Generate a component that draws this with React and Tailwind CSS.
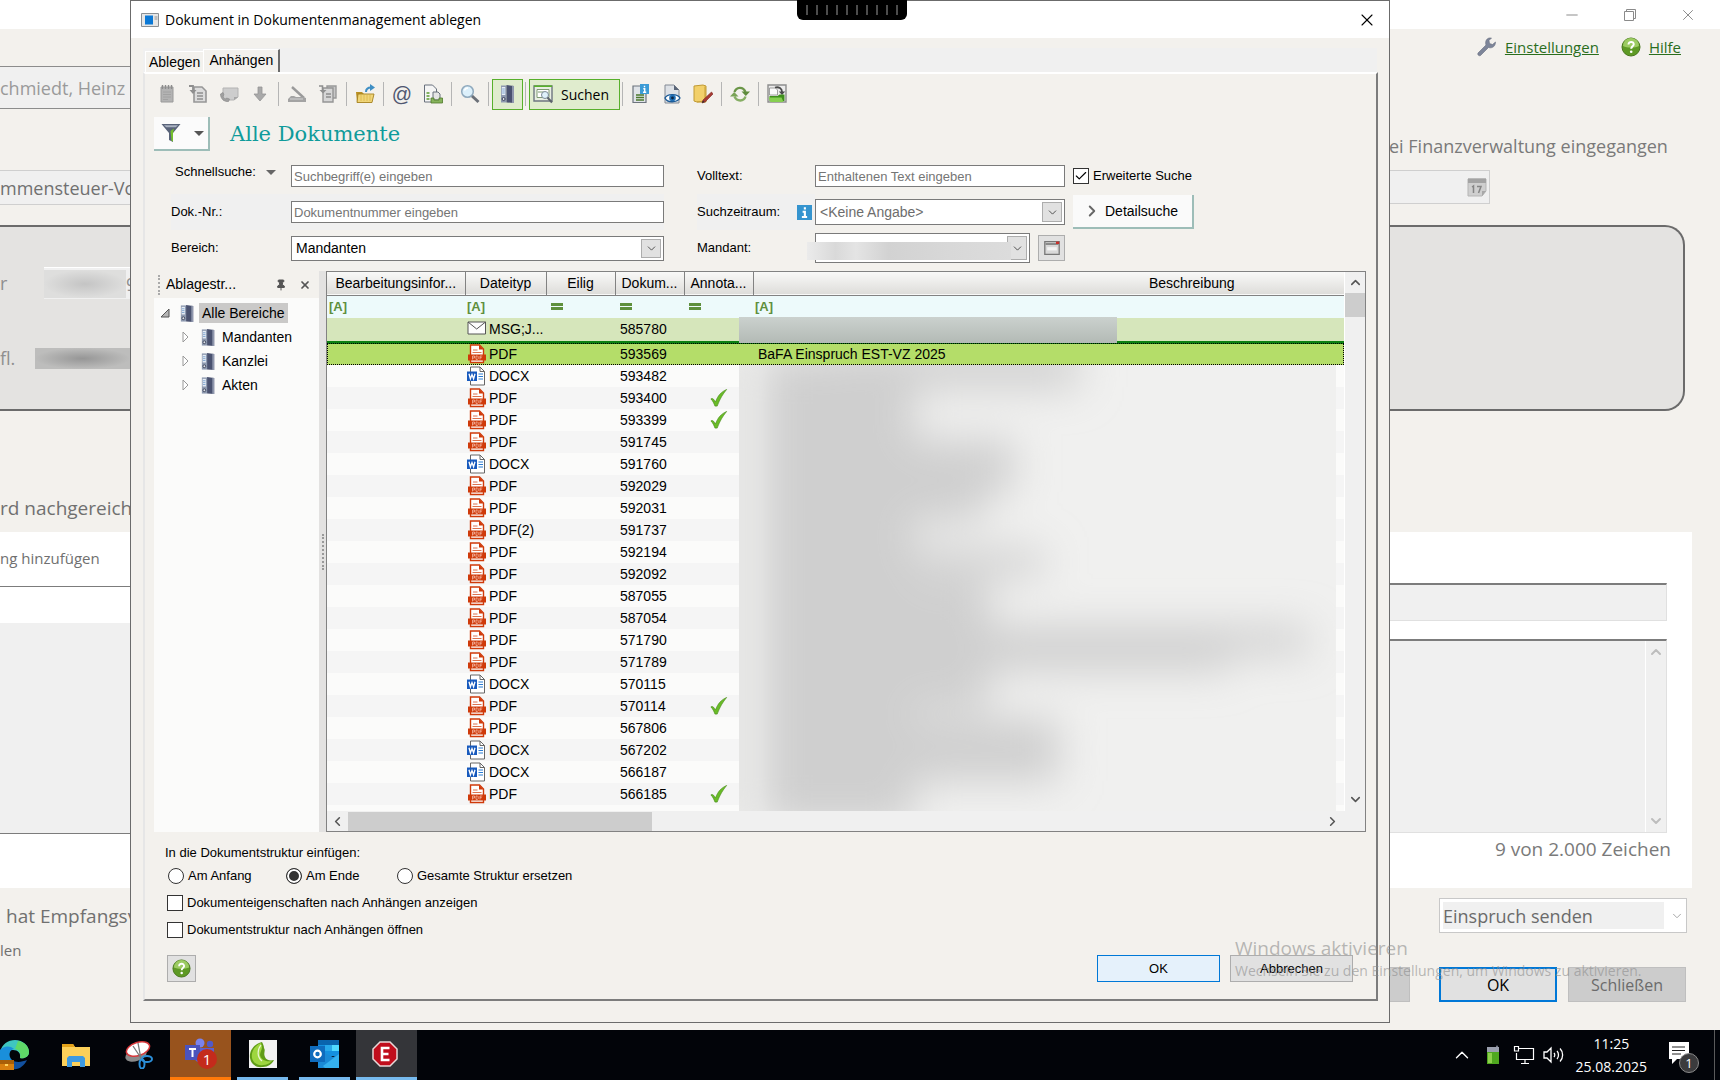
import React, { useState } from 'react';
import { Check, ChevronDown, ChevronLeft, ChevronRight, ChevronUp, Minus, Pin, X } from 'lucide-react';

const columns = [
  { label: 'Bearbeitungsinfor...', filter: 'text' },
  { label: 'Dateityp', filter: 'text' },
  { label: 'Eilig', filter: 'equal' },
  { label: 'Dokum...', filter: 'equal' },
  { label: 'Annota...', filter: 'equal' },
  { label: 'Beschreibung', filter: 'text' },
];

const documents = [
  { type: 'DOCX', no: '593482' },
  { type: 'PDF', no: '593400', checked: true },
  { type: 'PDF', no: '593399', checked: true },
  { type: 'PDF', no: '591745' },
  { type: 'DOCX', no: '591760' },
  { type: 'PDF', no: '592029' },
  { type: 'PDF', no: '592031' },
  { type: 'PDF(2)', no: '591737' },
  { type: 'PDF', no: '592194' },
  { type: 'PDF', no: '592092' },
  { type: 'PDF', no: '587055' },
  { type: 'PDF', no: '587054' },
  { type: 'PDF', no: '571790' },
  { type: 'PDF', no: '571789' },
  { type: 'DOCX', no: '570115' },
  { type: 'PDF', no: '570114', checked: true },
  { type: 'PDF', no: '567806' },
  { type: 'DOCX', no: '567202' },
  { type: 'DOCX', no: '566187' },
  { type: 'PDF', no: '566185', checked: true },
];

/* ---------- Icons ---------- */

const Svg = ({ size = 20, className = '', children }) => (
  <svg viewBox="0 0 20 20" width={size} height={size} fill="none" className={`shrink-0 ${className}`} aria-hidden="true">
    {children}
  </svg>
);

const BinderIcon = ({ size = 20 }) => (
  <Svg size={size}>
    <path d="M3 1.5h5.5v17H3z" fill="#8e9ab0" />
    <path d="M8.5 1 16 2v17l-7.5-.5z" fill="#4a5270" />
    <path d="M14 1.8 16 2v17l-2-.1z" fill="#8f97ad" />
    <path d="M3.8 3h3.5v8H3.8z" fill="#e8eef6" />
    <path d="M4.2 5h2.6M4.2 7h2.6M4.2 9h2.6" stroke="#7fa5cf" strokeWidth="1" />
    <circle cx="5.6" cy="15" r="1.5" fill="#dfe4ec" stroke="#3c4359" />
  </Svg>
);

const NotepadIcon = () => (
  <Svg>
    <path d="M4 3h12v15H4z" fill="#b3b3b3" stroke="#9a9a9a" />
    <path d="M5.5 1v4M8.5 1v4M11.5 1v4M14.5 1v4" stroke="#8d8d8d" strokeWidth="1.4" />
    <path d="M6 8h8M6 10.5h8M6 13h8M6 15.5h5" stroke="#a2a2a2" />
  </Svg>
);

const PageInIcon = () => (
  <Svg>
    <path d="M6 3h8l4 4v11H6z" fill="#dcdcdc" stroke="#979797" strokeWidth="1.6" />
    <path d="M9 9h6M9 12h6M9 15h6" stroke="#8f8f8f" strokeWidth="1.4" />
    <path d="M1 2h4v6" stroke="#8f8f8f" strokeWidth="1.8" />
    <path d="m1.5 6 3.5 4 3.5-4z" fill="#8f8f8f" />
  </Svg>
);

const PhoneNoteIcon = () => (
  <Svg>
    <path d="M4 4h15v9l-4 3H4z" fill="#cdcdcd" stroke="#b3b3b3" />
    <path d="M1.5 10c0 5 4 8 8 7.500l1-2.500-3-1-1 1c-1.500-.5-2.300-2-2.500-3l1-1-1-2.500z" fill="#a0a0a0" stroke="#8c8c8c" strokeWidth=".7" />
    <path d="m19 13-4 3v-3z" fill="#a6a6a6" />
  </Svg>
);

const ArrowDownIcon = () => (
  <Svg>
    <path d="M8 3h4v7h4l-6 7-6-7h4z" fill="#a9a9a9" stroke="#969696" strokeWidth=".8" />
  </Svg>
);

const ScannerIcon = () => (
  <Svg>
    <path d="m5 3 12 11" stroke="#9a9a9a" strokeWidth="2.4" />
    <path d="m4 12-3 3v3h18v-4l-3-1H9l-2-1z" fill="#a3a3a3" />
    <path d="M3 15h13" stroke="#d3d3d3" />
  </Svg>
);

const PagesInIcon = () => (
  <Svg>
    <path d="M9 2h9v12H9z" fill="#c7c7c7" stroke="#999" strokeWidth="1.4" />
    <path d="M5 4h10v14H5z" fill="#d6d6d6" stroke="#959595" strokeWidth="1.4" />
    <path d="M8 10h5M8 13h5" stroke="#8d8d8d" strokeWidth="1.3" />
    <path d="M1 2h3.500v4" stroke="#8f8f8f" strokeWidth="1.6" />
    <path d="m1.5 6 3.500 3.500L8.500 6z" fill="#8f8f8f" />
  </Svg>
);

const FolderOpenIcon = () => (
  <Svg>
    <path d="M1 8h6l2 2h8v8H2z" fill="#b98f22" />
    <path d="M3 10h16l-2 8.500H2z" fill="#f0d578" stroke="#a5811f" strokeWidth=".9" />
    <path d="M6 11v6M9 11v6M12 11v6M15 11v6" stroke="#dcb94e" strokeWidth=".9" />
    <path d="M11 8c0-3 2-4.500 5-4.500" stroke="#3f8fc4" strokeWidth="2" />
    <path d="m15 0 5 3.500-5 3.500z" fill="#3f8fc4" />
  </Svg>
);

const ReportIcon = () => (
  <Svg>
    <path d="M1.500 1h8l4 4v13h-12z" fill="#f5f5f5" stroke="#68707c" />
    <path d="M3.500 9h3M3.500 12h3M3.500 15h3" stroke="#5b9a2e" strokeWidth="1.4" />
    <path d="M10 8h5l2 2v6h-7z" fill="#e5e5e5" stroke="#68707c" />
    <path d="M8 14h3v2h5v-2h3.500v5H8z" fill="#86b35c" stroke="#4f7a2c" strokeWidth=".8" />
  </Svg>
);

const SearchIcon = () => (
  <Svg>
    <path d="m11.500 11.500 7 6.500" stroke="#6b7078" strokeWidth="3" />
    <circle cx="7.5" cy="7.5" r="5.8" fill="#dcf0fb" stroke="#8fa9bd" strokeWidth="1.5" />
    <path d="M4.500 6.500c.5-1.500 2-2.500 3.500-2.500" stroke="#fff" strokeWidth="1.4" />
  </Svg>
);

const SearchPanelIcon = () => (
  <Svg>
    <path d="M1 2h18v15H1z" fill="#e9efe3" stroke="#6d7680" strokeWidth="1.4" />
    <path d="M1 2.200h18" stroke="#59b22b" strokeWidth="1.6" />
    <path d="M4 5.500h12v8H4z" fill="#fff" stroke="#7f9a73" />
    <path d="M5 8h6" stroke="#7f9a73" />
    <circle cx="12" cy="11" r="3.5" fill="#dff1fa" stroke="#7c8a98" />
    <path d="m14.500 13.500 4.500 5" stroke="#5c636b" strokeWidth="2" />
  </Svg>
);

const PageInfoIcon = () => (
  <Svg>
    <path d="M2 2h13v16.500H2z" fill="#dfe3e8" stroke="#6d747e" strokeWidth="1.2" />
    <path d="M5 11h8M5 13.500h8M5 16h8" stroke="#4c7a2c" strokeWidth="1.3" />
    <path d="M9 0h9v10H9z" fill="#3b9bd6" />
    <path d="M13.500 1.800v1.500M12.300 4.700h1.400V8M12 8.200h3.200" stroke="#fff" strokeWidth="1.4" />
  </Svg>
);

const PreviewIcon = () => (
  <Svg>
    <path d="M3 1h9l5 5v13H3z" fill="#dde1e6" stroke="#838a94" />
    <path d="M12 1v5h5z" fill="#5b6678" />
    <path d="M3 14c2-4 12-5 15 0-3 5-13 5-15 0z" fill="#fff" stroke="#1c5b96" strokeWidth="1.4" />
    <circle cx="10.5" cy="14" r="3.3" fill="#1f6fb5" />
    <circle cx="10.5" cy="14" r="1.4" fill="#0c2340" />
  </Svg>
);

const FolderEditIcon = () => (
  <Svg>
    <path d="M1 2 10 1l3 1v16H4l-3-1z" fill="#f2d06a" stroke="#c09a34" />
    <path d="M4 18 12 17V2.500" stroke="#c89f35" />
    <path d="m18.500 8 1.500 2-8 8-3 1 1-3z" fill="#a63a34" stroke="#7d2520" strokeWidth=".6" />
    <path d="m9 19 1-2.600 1.600 1.600z" fill="#333" />
  </Svg>
);

const RefreshIcon = () => (
  <Svg>
    <path d="M4.500 8C6 3 13 2 15.500 8" stroke="#6b9648" strokeWidth="2.4" />
    <path d="M11.500 7.500H20L15.800 12z" fill="#5e8b3c" />
    <path d="M15.500 12.500C14 17.500 7 18 4.500 12.500" stroke="#86ae64" strokeWidth="2.4" />
    <path d="M0 12.500h8.500L4.200 8z" fill="#79a356" />
  </Svg>
);

const ArchiveIcon = () => (
  <Svg>
    <path d="M1 1h18v17H1z" fill="#ececec" stroke="#8d8d8d" strokeWidth="1.4" />
    <path d="M2.500 4h6l2 2v5h-8z" fill="#fafafa" stroke="#8b8b8b" strokeWidth=".8" />
    <path d="M8 3.500c4-1 7 1 7 4.500" stroke="#4a4a4a" strokeWidth="1.8" />
    <path d="M11.800 7.500h6.400L15 11z" fill="#4a4a4a" />
    <path d="M2.500 12h8l2-1.500h5V17h-15z" fill="#3f8f1c" />
    <path d="M1.500 13.500h13l2 4.500h-13z" fill="#86cf50" />
  </Svg>
);

const FunnelIcon = () => (
  <Svg>
    <path d="M.5 1h19L12 10v9l-4-2v-7z" fill="#596379" />
    <path d="M3 2.300h14l-2.200 2H5.200z" fill="#aab2c2" />
    <path d="M9.500 8 13 5.500 12 10v8.500l-1.500-.8z" fill="#74c02c" />
  </Svg>
);

const WrenchIcon = () => (
  <Svg>
    <path d="M12 1c-3 1-4 4-3 7l-8 8c-1 1.500 1 3.500 2.500 2.500l8-8c3 1 6-.5 6.700-3.500l.3-2-3 2.500-3-1-.5-3L14.500 1z" fill="#7d8599" stroke="#666d7e" strokeWidth=".6" />
  </Svg>
);

const HelpIcon = ({ size = 20 }) => (
  <Svg size={size}>
    <circle cx="10" cy="10" r="9" fill="#5e9a25" stroke="#47761c" />
    <path d="M2 9a8 8 0 0 1 16 0c-4 2-12 2-16 0z" fill="#9ccb62" />
    <path d="M7.500 7.500c0-3.500 5.500-3.300 5.200 0-.2 1.800-2.500 2-2.500 4.300" stroke="#fff" strokeWidth="2" />
    <circle cx="10.2" cy="14.8" r="1.3" fill="#fff" />
  </Svg>
);

const InfoIcon = () => (
  <Svg size={15}>
    <path d="M0 0h20v20H0z" fill="#3594cf" />
    <path d="M10.500 3v3M7.500 9h3v6M6.500 16h7" stroke="#fff" strokeWidth="2.8" />
  </Svg>
);

const PdfIcon = () => (
  <Svg size={20}>
    <path d="M3.500 1h9l4 4v13.500h-13z" fill="#fff" stroke="#cf3a0a" strokeWidth="1.4" />
    <path d="M12 1v4.500h4.500z" fill="#cf3a0a" />
    <path d="M6 6h4.500M5.500 8.500h9" stroke="#dd7350" />
    <path d="M1 10.500h18v6H1z" fill="#cf3a0a" />
    <path d="M5.500 15.500v-3.500h2v2h-2M9 12h1.500l.7.700v2l-.7.700H9zM13 15.500V12h2.300M13 13.700h1.800" stroke="#f5b9a5" strokeWidth=".8" />
  </Svg>
);

const WordIcon = () => (
  <Svg size={20}>
    <path d="M3.500 1h9.500l4.500 4.500v13.500h-14z" fill="#fff" stroke="#666" />
    <path d="M13 1v4.500h4.500" stroke="#666" />
    <path d="M11.500 8h4.500M11.500 10.500h4.500M11.500 13h4.500" stroke="#2b7cd3" />
    <path d="M0 5.500h10v9.500H0z" fill="#185abd" />
    <path d="m2 7.800 1.400 5L5 8.500l1.600 4.300 1.400-5" stroke="#fff" strokeWidth="1.3" />
  </Svg>
);

const MailIcon = () => (
  <Svg size={20}>
    <path d="M1 3h17.500v12H1z" fill="#fdfdfd" stroke="#555" />
    <path d="m1 3 8.700 7 8.800-7" stroke="#555" />
  </Svg>
);

const GreenCheck = () => (
  <Svg size={18}>
    <path d="M1 11c1.500-1 3-.5 5 3.500C9 7 12 3.500 18.500.5 14 6 11 11 8 19H5.500C4.500 16 3 13 1 11z" fill="#69bc26" stroke="#488a19" strokeWidth=".7" />
  </Svg>
);

const CalendarIcon = () => (
  <Svg>
    <path d="M1 2h18v12l-4 5H1z" fill="#cfcfcf" stroke="#b5b5b5" />
    <path d="M1 1.500h18V6H1z" fill="#a3a3a3" />
    <path d="m5 10 1.500-1v7M10 9.500h4l-2.500 6.500" stroke="#858585" strokeWidth="1.5" />
    <path d="M19 14h-4v5z" fill="#a8a8a8" />
  </Svg>
);

const CardIcon = () => (
  <Svg size={16}>
    <path d="M1 2h18v16H1z" fill="#d9d9d9" stroke="#777" strokeWidth="1.6" />
    <path d="M2 5h16" stroke="#777" strokeWidth="2" />
    <path d="M15 2h4v3h-4z" fill="#c9302c" />
    <path d="M4 9h12v4H4z" fill="#f4f4f4" />
  </Svg>
);

const fileIcons = { PDF: <PdfIcon />, 'PDF(2)': <PdfIcon />, DOCX: <WordIcon /> };

/* ---------- Shared controls ---------- */

const Separator = ({ className = 'mx-2' }) => <span className={`w-px h-6 bg-[#b5b5b5] ${className}`} />;

const ToolButton = ({ label, disabled, children }) => (
  <button type="button" aria-label={label} disabled={disabled} className="w-5 h-5 flex items-center justify-center">
    {children}
  </button>
);

const Combo = ({ id, value, className, textClass = 'text-black' }) => (
  <div className={`relative bg-white border border-[#7a7a7a] ${className}`}>
    <select id={id} className={`appearance-none w-full h-full pl-1 text-[14px] bg-transparent outline-none ${textClass}`}>
      <option>{value}</option>
    </select>
    <span className="absolute right-0.5 top-0.5 bottom-0.5 w-5 bg-[#e1e1e1] border border-[#adadad] flex items-center justify-center pointer-events-none">
      <ChevronDown size={13} strokeWidth={1.5} className="text-[#333]" />
    </span>
  </div>
);

const RadioOption = ({ label, value, selected, onSelect, className = '' }) => (
  <label className={`flex items-center gap-1 text-[13px] ${className}`}>
    <input
      type="radio"
      name="position"
      checked={selected === value}
      onChange={() => onSelect(value)}
      className="appearance-none w-4 h-4 rounded-full border border-[#333] bg-white checked:bg-[#333] checked:shadow-[inset_0_0_0_2px_white]"
    />
    {label}
  </label>
);

const CheckOption = ({ label, defaultChecked, className = '' }) => (
  <label className={`flex items-center gap-1 text-[13px] leading-4 whitespace-nowrap ${className}`}>
    <span className="relative w-4 h-4">
      <input type="checkbox" defaultChecked={defaultChecked} className="peer appearance-none block w-4 h-4 border border-[#333] bg-white" />
      <Check size={14} strokeWidth={2} className="absolute left-px top-px hidden peer-checked:block" />
    </span>
    {label}
  </label>
);

/* ---------- Dialog ---------- */

const Toolbar = () => (
  <div className="flex items-center h-8 pl-3">
    <div className="flex gap-[11px]">
      <ToolButton label="Notiz" disabled><NotepadIcon /></ToolButton>
      <ToolButton label="Dokument importieren" disabled><PageInIcon /></ToolButton>
      <ToolButton label="Telefonnotiz" disabled><PhoneNoteIcon /></ToolButton>
      <ToolButton label="Herunterladen" disabled><ArrowDownIcon /></ToolButton>
    </div>
    <Separator />
    <div className="flex gap-[11px]">
      <ToolButton label="Scannen" disabled><ScannerIcon /></ToolButton>
      <ToolButton label="Dokumente importieren" disabled><PagesInIcon /></ToolButton>
    </div>
    <Separator />
    <ToolButton label="Öffnen"><FolderOpenIcon /></ToolButton>
    <Separator />
    <div className="flex gap-[11px]">
      <ToolButton label="E-Mail"><span className="text-[20px] leading-5 text-[#4f5770]">@</span></ToolButton>
      <ToolButton label="Bericht"><ReportIcon /></ToolButton>
    </div>
    <Separator />
    <ToolButton label="Suche"><SearchIcon /></ToolButton>
    <Separator className="ml-2 mr-[3px]" />
    <button type="button" aria-label="Ablagestruktur" className="h-[31px] w-[31px] flex items-center justify-center bg-[#e0ecce] border border-[#58b02c]">
      <BinderIcon />
    </button>
    <Separator className="ml-0.5 mr-[3px]" />
    <button type="button" className="h-[31px] w-[91px] flex items-center pl-[3px] bg-[#e0ecce] border border-[#58b02c] font-['Open_Sans',sans-serif] text-[14px]">
      <SearchPanelIcon />
      <span className="pl-2">Suchen</span>
    </button>
    <Separator className="ml-0.5 mr-2" />
    <div className="flex gap-[11px]">
      <ToolButton label="Eigenschaften"><PageInfoIcon /></ToolButton>
      <ToolButton label="Vorschau"><PreviewIcon /></ToolButton>
      <ToolButton label="Bearbeiten"><FolderEditIcon /></ToolButton>
    </div>
    <Separator />
    <ToolButton label="Aktualisieren"><RefreshIcon /></ToolButton>
    <Separator />
    <ToolButton label="Archiv"><ArchiveIcon /></ToolButton>
  </div>
);

const inputClass = 'w-full h-[22px] bg-white border border-[#7a7a7a] px-0.5 text-[13px] placeholder:text-[#757575] outline-none';

const SearchForm = () => (
  <div className="grid grid-cols-[120px_373px_33px_118px_250px_1fr] pl-[26px] text-[13px]">
    <label htmlFor="quick" className="flex items-center h-9 gap-2.5 pb-2 pl-1">
      Schnellsuche:
      <span className="border-x-[5px] border-x-transparent border-t-[5px] border-t-[#666]" />
    </label>
    <div className="flex items-center h-9">
      <input id="quick" type="text" placeholder="Suchbegriff(e) eingeben" className={inputClass} />
    </div>
    <span />
    <label htmlFor="fulltext" className="flex items-center h-9">Volltext:</label>
    <div className="flex items-center h-9">
      <input id="fulltext" type="text" placeholder="Enthaltenen Text eingeben" className={inputClass} />
    </div>
    <CheckOption label="Erweiterte Suche" defaultChecked className="pl-2" />

    <label htmlFor="docno" className="flex items-center h-9 bg-[#f0f0f0]">Dok.-Nr.:</label>
    <div className="flex items-center h-9 bg-[#f0f0f0]">
      <input id="docno" type="text" placeholder="Dokumentnummer eingeben" className={inputClass} />
    </div>
    <span />
    <div className="flex items-center justify-between h-9 pr-[3px] bg-[#f0f0f0]">
      <label htmlFor="period">Suchzeitraum:</label>
      <InfoIcon />
    </div>
    <div className="flex items-center h-9">
      <Combo id="period" value="&lt;Keine Angabe&gt;" textClass="text-[#6d6d6d]" className="w-full h-[26px]" />
    </div>
    <div className="flex items-center h-9 pl-2">
      <button type="button" className="flex items-center gap-1 w-[121px] h-[34px] pl-2.5 bg-[#fafafa] border-r-2 border-b-2 border-[#9dbdb8] text-[14px]">
        <ChevronRight size={18} strokeWidth={2.5} className="text-[#666]" />
        Detailsuche
      </button>
    </div>

    <label htmlFor="area" className="flex items-center h-9">Bereich:</label>
    <div className="flex items-center h-9">
      <Combo id="area" value="Mandanten" className="w-full h-[25px]" />
    </div>
    <span />
    <label htmlFor="client" className="flex items-center h-9">Mandant:</label>
    <div className="flex items-center justify-between h-9 relative">
      <Combo id="client" value="" className="w-[215px] h-[30px]" />
      <button type="button" aria-label="Mandant wählen" className="w-[27px] h-[26px] flex items-center justify-center bg-[#e1e1e1] border border-[#adadad]">
        <CardIcon />
      </button>
      <div className="absolute -left-2 top-3 w-[204px] h-[18px] bg-[linear-gradient(90deg,#ebebeb,#d9d9d9_14%,#e4e4e4_24%,#d2d2d2_40%,#d8d8d8_70%,#dcdcdc)]" />
    </div>
  </div>
);

const TreeItem = ({ label, root }) => (
  <li className={`flex items-center h-6 text-[14px] ${root ? 'pl-1.5' : 'pl-[27px]'}`}>
    <svg viewBox="0 0 10 12" width="10" height="12" fill="none" className="shrink-0">
      {root ? <path d="M9 2v8H1z" fill="#b5b5b5" stroke="#555" /> : <path d="M2 1v10l5-5z" fill="#fff" stroke="#999" />}
    </svg>
    <span className={root ? 'ml-2' : 'ml-2'}><BinderIcon size={19} /></span>
    <span className={root ? 'ml-0.5 h-5 leading-5 px-[3px] bg-[#cac9c8]' : 'ml-1'}>{label}</span>
  </li>
);

const Tree = () => (
  <aside className="w-[165px] shrink-0 flex flex-col bg-[#fbfbfa]">
    <header className="flex items-center h-[27px] bg-[#f3f1ed] pl-1 pr-2 text-[14px]">
      <span className="h-5 border-l-2 border-dotted border-[#aaa] pr-1.5" />
      <span className="flex-1">Ablagestr...</span>
      <button type="button" aria-label="Anheften" className="mr-3"><Pin size={12} fill="#555" className="text-[#555]" /></button>
      <button type="button" aria-label="Bereich schließen"><X size={12} strokeWidth={3.5} className="text-[#555]" /></button>
    </header>
    <ul className="pt-[3px]">
      <TreeItem label="Alle Bereiche" root />
      <TreeItem label="Mandanten" />
      <TreeItem label="Kanzlei" />
      <TreeItem label="Akten" />
    </ul>
  </aside>
);

const FilterMark = ({ kind }) =>
  kind === 'text' ? (
    <span className="text-[13px] font-bold text-[#5e8f3c]">[A]</span>
  ) : (
    <span className="block w-3 h-[7px] ml-[3px] border-y-[3px] border-[#5e8f3c]" />
  );

// Soft grey cover over the confidential description column
const Redaction = () => (
  <svg viewBox="0 0 597 447" preserveAspectRatio="none" className="w-full h-full block">
    <defs>
      <filter id="soft" x="-20%" y="-20%" width="140%" height="140%">
        <feGaussianBlur stdDeviation="20" />
      </filter>
    </defs>
    <rect width="597" height="447" fill="#f0f0ef" />
    <g filter="url(#soft)" fill="#cfcfcf">
      <rect x="25" y="-10" width="150" height="470" />
      <rect x="100" y="-15" width="240" height="38" />
      <rect x="100" y="75" width="175" height="52" />
      <rect x="100" y="127" width="145" height="30" />
      <rect x="100" y="185" width="205" height="26" />
      <rect x="100" y="215" width="150" height="130" />
      <rect x="220" y="262" width="350" height="28" />
      <rect x="220" y="288" width="270" height="18" />
      <rect x="100" y="355" width="220" height="62" />
    </g>
    <rect x="-20" y="-10" width="35" height="470" fill="#e2e2e1" filter="url(#soft)" />
  </svg>
);

const DocumentTable = () => (
  <section className="relative flex-1 min-w-0 flex flex-col border border-[#828282] bg-[#fbfbfa]">
    <div className="flex flex-1 min-h-0">
      <div className="relative flex-1 min-w-0">
        <table className="w-full table-fixed border-collapse text-[14px] leading-5">
          <colgroup>
            <col className="w-[138px]" />
            <col className="w-[81px]" />
            <col className="w-[69px]" />
            <col className="w-[69px]" />
            <col className="w-[69px]" />
            <col />
          </colgroup>
          <thead>
            <tr className="h-[23px] bg-linear-to-b from-[#f9f9f8] to-[#deddda] border-b border-[#828282]">
              {columns.map((col) => (
                <th
                  key={col.label}
                  className={`p-0 font-normal whitespace-nowrap border-r border-[#828282] last:border-r-0 ${col.label === 'Beschreibung' ? 'pl-[286px] pr-0' : ''}`}
                >
                  {col.label}
                </th>
              ))}
            </tr>
            <tr className="h-[22px] bg-[#edfafb]">
              {columns.map((col) => (
                <td key={col.label} className="p-0 pl-0.5">
                  <div className="flex items-center h-[22px]"><FilterMark kind={col.filter} /></div>
                </td>
              ))}
            </tr>
          </thead>
          <tbody>
            <tr className="h-[25px] bg-[#d6e6bb] border-b-[3px] border-[#0c8012]">
              <td className="p-0" />
              <td className="p-0 pl-0.5"><div className="flex items-center gap-0.5"><MailIcon />MSG;J...</div></td>
              <td className="p-0" />
              <td className="p-0 pl-[5px]">585780</td>
              <td className="p-0" />
              <td className="p-0" />
            </tr>
            <tr className="h-[22px] bg-[#b4dd69] outline-1 outline-dotted -outline-offset-1 outline-black">
              <td className="p-0" />
              <td className="p-0 pl-0.5"><div className="flex items-center gap-0.5"><PdfIcon />PDF</div></td>
              <td className="p-0" />
              <td className="p-0 pl-[5px]">593569</td>
              <td className="p-0" />
              <td className="p-0 pl-[5px]">BaFA Einspruch EST-VZ 2025</td>
            </tr>
            {documents.map((doc) => (
              <tr key={doc.no} className="h-[22px] even:bg-[#f5f5f5]">
                <td className="p-0" />
                <td className="p-0 pl-0.5"><div className="flex items-center gap-0.5">{fileIcons[doc.type]}{doc.type}</div></td>
                <td className="p-0" />
                <td className="p-0 pl-[5px]">{doc.no}</td>
                <td className="p-0 pl-[26px]">{doc.checked && <GreenCheck />}</td>
                <td className="p-0" />
              </tr>
            ))}
          </tbody>
        </table>
        <div className="absolute left-[412px] top-[45px] w-[378px] h-[26px] bg-linear-to-b from-[#cbd1ce] to-[#b3bab5]" />
        <div className="absolute left-[412px] right-2 top-[93px] bottom-0 overflow-hidden"><Redaction /></div>
      </div>
      <div className="w-[21px] flex flex-col items-center bg-[#f0f0f0] border-l border-white">
        <button type="button" aria-label="Nach oben" className="h-[21px] flex items-center"><ChevronUp size={15} strokeWidth={2.5} className="text-[#555]" /></button>
        <span className="w-full h-6 bg-[#cdcdcd]" />
        <button type="button" aria-label="Nach unten" className="mt-auto h-6 flex items-center"><ChevronDown size={15} strokeWidth={2.5} className="text-[#555]" /></button>
      </div>
    </div>
    <div className="flex items-center h-5 pr-[25px] bg-[#f0f0f0]">
      <button type="button" aria-label="Nach links" className="w-[21px] flex justify-center"><ChevronLeft size={15} strokeWidth={2.5} className="text-[#555]" /></button>
      <span className="w-[304px] h-[19px] bg-[#cdcdcd]" />
      <button type="button" aria-label="Nach rechts" className="ml-auto"><ChevronRight size={15} strokeWidth={2.5} className="text-[#555]" /></button>
    </div>
  </section>
);

const Dialog = () => {
  const [position, setPosition] = useState('end');

  return (
    <div role="dialog" aria-labelledby="dialog-title" className="absolute left-[130px] right-[330px] top-0 h-[1023px] flex flex-col bg-[#f3f1ed] border border-[#6b6b6b] text-black">
      {/* Title bar */}
      <header className="flex items-center h-[37px] shrink-0 bg-white pl-2.5 pr-3">
        <svg viewBox="0 0 18 14" width="18" height="14" fill="none">
          <path d="M.5.5h17v13H.5z" fill="#e6e6e6" stroke="#8a8f94" />
          <path d="M4 2.500h8v9H4z" fill="#0a78d6" />
          <path d="M13.500 3h3v4h-3z" fill="#bcbcbc" />
        </svg>
        <h1 id="dialog-title" className="flex-1 font-['Open_Sans',sans-serif] text-[14px] pl-1.5">Dokument in Dokumentenmanagement ablegen</h1>
        <button type="button" aria-label="Schließen"><X size={20} strokeWidth={1.3} /></button>
      </header>

      {/* Tabs */}
      <div className="flex items-end h-[34px] pt-2.5 mx-3 text-[14px]">
        <div className="flex-1 h-6 flex items-end bg-[#f0f0f0]">
          <button type="button" className="h-[21px] ml-0.5 px-[3px] pb-0.5 bg-[#f3f1ed] border-l border-t border-white">Ablegen</button>
          <button type="button" className="h-[23px] px-[5px] pb-1 bg-[#f3f1ed] border-l border-t border-white border-r-2 border-r-[#6b6b6b]">Anhängen</button>
        </div>
      </div>

      <div className="flex-1 min-h-0 flex flex-col ml-3 mr-[11px] mb-[21px] pt-1 pr-2.5 border-2 border-l-[#e6e6e6] border-t-white border-r-[#7c7c7c] border-b-[#7c7c7c]">
        <Toolbar />

        <div className="flex items-center h-[34px] mt-[7px] pl-[9px]">
          <button type="button" aria-label="Filter" className="flex items-center gap-[13px] w-14 h-[34px] pl-[7px] bg-[#fbfbfb] border-r-2 border-b-2 border-[#9dbdb8]">
            <FunnelIcon />
            <span className="border-x-[5px] border-x-transparent border-t-[5px] border-t-[#555]" />
          </button>
          <h2 className="pl-5 font-['DejaVu_Serif',serif] text-[21px] leading-7 text-[#0f9b9b]">Alle Dokumente</h2>
        </div>

        <div className="pt-[7px]"><SearchForm /></div>

        <div className="flex h-[561px] mt-[5px] pl-[9px]">
          <Tree />
          <div className="w-[7px] flex items-center justify-center bg-[#e3e2e1]">
            <span className="h-9 border-l-2 border-dotted border-[#999]" />
          </div>
          <DocumentTable />
        </div>

        <fieldset className="pl-5 pt-[11px] text-[13px]">
          <legend className="float-left w-full leading-5">In die Dokumentstruktur einfügen:</legend>
          <div className="flex items-center pt-[3px] pl-[3px] leading-5 clear-both">
            <RadioOption label="Am Anfang" value="start" selected={position} onSelect={setPosition} className="w-[118px]" />
            <RadioOption label="Am Ende" value="end" selected={position} onSelect={setPosition} className="w-[111px]" />
            <RadioOption label="Gesamte Struktur ersetzen" value="all" selected={position} onSelect={setPosition} />
          </div>
        </fieldset>
        <CheckOption label="Dokumenteigenschaften nach Anhängen anzeigen" className="mt-[9px] pl-[22px]" />
        <CheckOption label="Dokumentstruktur nach Anhängen öffnen" className="mt-[11px] pl-[22px]" />

        <div className="flex items-center mt-auto mb-[17px] pl-[22px] pr-[13px] text-[13px]">
          <button type="button" aria-label="Hilfe" className="w-[29px] h-[27px] flex items-center justify-center bg-[#e1e1e1] border border-[#adadad]">
            <HelpIcon size={19} />
          </button>
          <button type="button" className="ml-auto w-[123px] h-[27px] bg-[#e5f1fb] border border-[#0078d7]">OK</button>
          <button type="button" className="ml-2.5 w-[123px] h-[27px] bg-[#e1e1e1] border border-[#adadad]">Abbrechen</button>
        </div>
      </div>
    </div>
  );
};

/* ---------- Window behind the dialog ---------- */

const LeftPane = () => (
  <div className="w-[130px] overflow-hidden whitespace-nowrap text-[18px] leading-6 text-[#707070]">
    <div className="mt-[37px] h-[43px] flex items-center bg-[#f0f0f0] border-y border-[#8c8c8c] text-[#9a9a9a]">chmiedt, Heinz</div>
    <div className="mt-[61px] h-[35px] flex items-center bg-[#f0f0f0] border-y border-[#cfcfcf]">mmensteuer-Vo</div>
    <div className="mt-5 h-[186px] bg-[#e4e3e1] border-y-2 border-[#6b6b6b] text-[#8f8f8f]">
      <div className="flex items-center justify-between mt-[38px] h-9">
        <span>r</span>
        <span className="w-[86px] h-8 flex items-center justify-end bg-[#f0f0f0] border-t border-white">
          <span className="flex-1 h-7 bg-[radial-gradient(closest-side,#c4c4c4,#dededd)]" />
          <span className="w-1 overflow-hidden">9</span>
        </span>
      </div>
      <div className="flex items-center justify-between mt-[39px] h-9">
        <span>fl.</span>
        <span className="w-[95px] h-[21px] bg-[radial-gradient(closest-side,#969696,#bdbdbc)]" />
      </div>
    </div>
    <p className="mt-[85px] h-[36px] text-[19px]">rd nachgereich</p>
    <div className="h-[356px] bg-white">
      <p className="h-[55px] pt-[14px] border-b border-[#7c7c7c] text-[15px]">ng hinzufügen</p>
      <div className="mt-9 h-[211px] bg-[#f0f0f0] border-b border-[#7c7c7c]" />
    </div>
    <p className="mt-4 pl-1.5 h-6 text-[19px]">hat Empfangsv</p>
    <p className="mt-2.5 text-[15px] leading-6">len</p>
  </div>
);

const RightPane = () => (
  <div className="w-[331px] whitespace-nowrap text-[18px] leading-6 text-[#7a7a7a]">
    <nav className="flex items-center justify-end gap-2 h-9 pr-[39px] text-[15px] text-[#2a6e1d]">
      <WrenchIcon />
      <a href="#einstellungen" className="underline mr-3.5">Einstellungen</a>
      <HelpIcon />
      <a href="#hilfe" className="underline">Hilfe</a>
    </nav>
    <p className="mt-[69px] h-9">ei Finanzverwaltung eingegangen</p>
    <div className="flex items-center justify-end w-[101px] h-[34px] pr-0.5 bg-[#f0f0f0] border border-l-0 border-[#cfcfcf]">
      <CalendarIcon />
    </div>
    <div className="mt-[21px] mr-[35px] h-[186px] rounded-r-[20px] bg-[#e4e3e1] border-2 border-l-0 border-[#6b6b6b]" />
    <div className="mt-[121px] mr-7 h-[356px] pr-[25px] pt-[51px] bg-white">
      <input type="text" disabled aria-label="Betreff" className="block w-full h-[38px] bg-[#f0f0f0] border border-[#e0e0e0] border-t-2 border-t-[#7c7c7c]" />
      <div className="flex justify-end mt-[18px] h-[194px] bg-[#f0f0f0] border border-[#e0e0e0] border-t-2 border-t-[#7c7c7c]">
        <div className="flex flex-col justify-between items-center w-[21px] py-[3px] border-l border-white text-[#bdbdbd]">
          <ChevronUp size={16} strokeWidth={3} />
          <ChevronDown size={16} strokeWidth={3} />
        </div>
      </div>
      <p className="mt-1 -mr-1 text-right text-[19px]">9 von 2.000 Zeichen</p>
    </div>
    <div className="relative mt-2.5 ml-auto mr-[33px] w-[248px] h-[35px] p-[3px] bg-white border border-[#c8c8c8]">
      <select disabled aria-label="Aktion" className="appearance-none block w-[221px] h-full bg-[#f0f0f0] text-[#6b6b6b]">
        <option>Einspruch senden</option>
      </select>
      <ChevronDown size={14} strokeWidth={1.5} className="absolute right-0.5 top-2.5 text-[#9a9a9a]" />
    </div>
    <div className="flex mt-[34px] pr-[34px] text-[16px]">
      <span className="w-[21px] h-[35px] bg-[#cccccc] border border-[#bfbfbf]" />
      <button type="button" className="ml-auto w-[118px] h-[35px] bg-[#e1e1e1] border-2 border-[#0078d7] text-black">OK</button>
      <button type="button" disabled className="ml-[11px] w-[118px] h-[35px] bg-[#cccccc] border border-[#bfbfbf] text-[#6b6b6b]">Schließen</button>
    </div>
  </div>
);

/* ---------- Taskbar ---------- */

const Taskbar = () => (
  <footer className="flex h-[50px] bg-[#020409] text-white overflow-hidden">
    <button type="button" aria-label="Edge" className="w-[45px] flex items-center">
      <svg viewBox="0 0 30 30" width="30" height="30" fill="none">
        <path d="M0 12C2 4 8 0 15 0c8 0 14 6 14 12 0 5-5 7-9 6 1-5-2-8-7-8-6 0-9 3-13 2z" fill="#3fc6c0" />
        <path d="M18 1c7 1 11 6 11 11 0 5-5 7-9 6 1-4 0-8-5-9z" fill="#5fd968" />
        <path d="M0 10c3-4 10-5 14-1-5 1-6 7-2 11H0z" fill="#1a8fdb" />
        <path d="M12 20c4 3 10 2 15 0-3 6-8 10-14 9z" fill="#12509e" />
        <path d="M0 20h14v10H0z" fill="#d8800f" />
        <path d="M0 20h14v4H0z" fill="#a85f08" />
        <path d="M5 24h3v2H5z" fill="#ffd25a" />
      </svg>
    </button>
    <button type="button" aria-label="Explorer" className="w-[62px] flex items-center justify-center">
      <svg viewBox="0 0 28 24" width="28" height="24" fill="none">
        <path d="M0 1h11l2 3h15v19H0z" fill="#fcd059" />
        <path d="M0 1h11l2 3H0z" fill="#e3a21a" />
        <path d="M5 24V15l2-2h14l2 2v9h-5v-5h-8v5z" fill="#3e9ae0" />
      </svg>
    </button>
    <button type="button" aria-label="Snipping Tool" className="w-[63px] flex items-center justify-center">
      <svg viewBox="0 0 28 28" width="28" height="28" fill="none">
        <ellipse cx="11" cy="14" rx="11" ry="6" transform="rotate(-18 11 14)" fill="#8a8a8a" />
        <ellipse cx="13" cy="8" rx="12" ry="6.5" transform="rotate(-18 13 8)" fill="#fff" stroke="#d8373a" strokeWidth="1.5" />
        <path d="m13 2 3 16M8 5l8 12" stroke="#777" strokeWidth="1.3" />
        <ellipse cx="22" cy="18" rx="5" ry="3" stroke="#2b8fd9" strokeWidth="2" />
        <ellipse cx="17" cy="23" rx="2.5" ry="4.5" stroke="#2b8fd9" strokeWidth="2" />
      </svg>
    </button>
    <button type="button" aria-label="Teams" className="w-[61px] flex items-center justify-center bg-[#98531d] border-b-[3px] border-[#ff7a0a]">
      <svg viewBox="0 0 34 32" width="34" height="32" fill="none">
        <circle cx="16" cy="5" r="4.5" fill="#7b83eb" />
        <circle cx="26" cy="6" r="3.2" fill="#5059c9" />
        <path d="M10 10h20v10c-3 8-16 8-20 0z" fill="#5b62d0" />
        <path d="M1 7h15v15H1z" fill="#4b53bc" />
        <path d="M5 11h7M8.500 11v8" stroke="#fff" strokeWidth="2" />
        <circle cx="23" cy="21" r="10" fill="#c42b1c" />
        <text x="23" y="26.5" textAnchor="middle" fontSize="15" fill="#fff" fontFamily="Open Sans">1</text>
      </svg>
    </button>
    <button type="button" aria-label="Kanzlei-Software" className="ml-1.5 w-[51px] flex items-center justify-center border-b-[3px] border-[#76b9ed]">
      <svg viewBox="0 0 28 28" width="28" height="28" fill="none">
        <path d="M0 0h28v28H0z" fill="#f2f2f2" />
        <path d="M13 2C5 4 0 11 1 18c1 6 6 10 13 9 5 0 9-3 11-7-4 1-8 0-9-3-2-4 1-6-1-9 0-2-1-4-2-6z" fill="#5f9c17" />
        <path d="M12 3C5 6 2 12 3 18c1 5 6 8 11 7 4 0 7-2 9-4-6 1-11-1-12-6 0-3 2-5 2-8z" fill="#9ed63f" />
        <path d="M12 5c-4 5-4 12 1 16" stroke="#eaf6d4" strokeWidth="1.2" />
      </svg>
    </button>
    <button type="button" aria-label="Outlook" className="ml-[11px] w-[51px] flex items-center justify-center border-b-[3px] border-[#76b9ed]">
      <svg viewBox="0 0 30 28" width="30" height="28" fill="none">
        <path d="M8 0h21v16H8z" fill="#1490df" />
        <path d="M8 0h21v5H8z" fill="#0a64ad" />
        <path d="M15 5h7v6h-7z" fill="#28a8ea" />
        <path d="M22 5h7v6h-7z" fill="#50d9ff" />
        <path d="M8 12h5l10 5 6-3v14H8z" fill="#1a8ad6" />
        <path d="m29 14-16 12 2 2h14z" fill="#35b1ee" />
        <path d="M0 6h15v16H0z" fill="#0f6cbd" />
        <circle cx="7.5" cy="14" r="3.3" stroke="#fff" strokeWidth="2.2" />
      </svg>
    </button>
    <button type="button" aria-label="Einspruch" className="ml-1.5 w-[61px] pr-1 flex items-center justify-center bg-[#343539] border-b-[3px] border-[#76b9ed]">
      <svg viewBox="0 0 26 26" width="26" height="26" fill="none">
        <path d="M8 1h10l7 7v10l-7 7H8l-7-7V8z" fill="#c00d1c" stroke="#e8d8d8" strokeWidth="1.5" />
        <path d="M17.500 7H10v12h7.500M10 13h6.500" stroke="#fff" strokeWidth="2.6" />
      </svg>
    </button>

    <div className="ml-auto flex items-center">
      <ChevronUp size={22} strokeWidth={1.5} />
      <svg viewBox="0 0 16 20" width="16" height="20" fill="none" className="ml-3">
        <path d="M2 2h9l1-2 1 2h1v5H2z" fill="#9a9fae" />
        <path d="M2 7h12v12H2z" fill="#4fa81f" />
        <path d="M3 8h4v10H3z" fill="#8ed04d" />
      </svg>
      <svg viewBox="0 0 22 20" width="22" height="20" fill="none" stroke="#fff" className="ml-3" strokeWidth="1.2">
        <path d="M6 3.500h14.500v11H3.500V8M12 14.500V18M8 18.500h8M1.500 1.500h4V6h-4z" />
      </svg>
      <svg viewBox="0 0 22 20" width="22" height="20" fill="none" stroke="#fff" className="ml-2" strokeWidth="1.3">
        <path d="M1 7h3l4-4v14l-4-4H1zM11 8c1 1 1 3 0 4M14 6c2 2 2 6 0 8M17 3.500c3.500 3.500 3.500 9.500 0 13" />
      </svg>
      <time className="ml-[11px] text-center text-[14px] leading-[23px]">
        11:25<br />25.08.2025
      </time>
      <div className="relative ml-[21px] mr-[15px] w-[31px] h-7">
        <svg viewBox="0 0 22 24" width="22" height="24" fill="none">
          <path d="M1 1h20v17H9l-5 5v-5H1z" fill="#fff" />
          <path d="M4 6h13M4 9.500h13M4 13h9" stroke="#222" strokeWidth="1.2" />
        </svg>
        <span className="absolute right-0 top-3 w-5 h-5 rounded-full bg-[#3b3b3d] border border-[#8a8a8a] text-[13px] leading-[18px] text-center">1</span>
      </div>
      <span className="w-px h-[50px] bg-[#5a5a5a] mr-[5px]" />
    </div>
  </footer>
);

const App = () => {
  return (
    <div className="relative min-h-screen flex flex-col overflow-hidden bg-[#f3f1ed] font-['Open_Sans',sans-serif]">
      <header className="flex items-center justify-end gap-[42px] h-[29px] pr-[23px] bg-white text-[#8a8a8a]">
        <button type="button" aria-label="Minimieren"><Minus size={18} strokeWidth={1.3} /></button>
        <button type="button" aria-label="Wiederherstellen">
          <svg viewBox="0 0 14 14" width="14" height="14" fill="none" stroke="currentColor">
            <path d="M1.500 3.500h9v9h-9zM3.500 3.500v-2h9v9h-2" />
          </svg>
        </button>
        <button type="button" aria-label="Fenster schließen"><X size={18} strokeWidth={1.3} /></button>
      </header>
      <main className="flex-1 flex justify-between">
        <LeftPane />
        <RightPane />
      </main>
      <Taskbar />

      <div className="font-['Liberation_Sans',Arial,sans-serif]"><Dialog /></div>

      {/* Connection bar grip of the remote session */}
      <div className="absolute top-0 left-[797px] w-[110px] h-5 flex justify-center gap-2 pt-[5px] rounded-b-md bg-black">
        {Array.from({ length: 10 }, (_, i) => <span key={i} className="w-0.5 h-2.5 bg-[#4d4d4d]" />)}
      </div>

      <div className="absolute left-[1235px] top-[935px] text-[#8c8c8c]/60 pointer-events-none whitespace-nowrap">
        <p className="text-[19px] leading-[26px]">Windows aktivieren</p>
        <p className="text-[14px] leading-5">Wechseln Sie zu den Einstellungen, um Windows zu aktivieren.</p>
      </div>
    </div>
  );
};

export default App;
